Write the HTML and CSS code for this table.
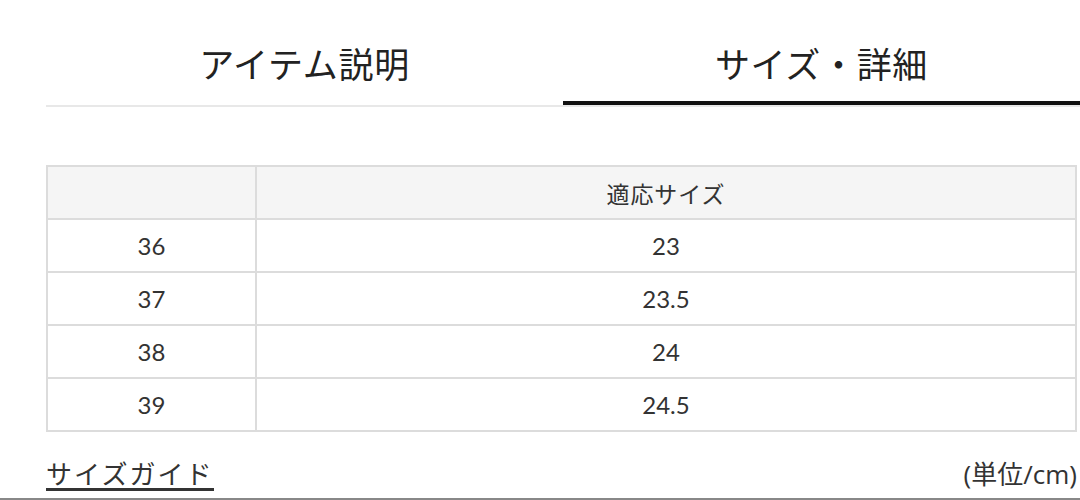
FILE: index.html
```html
<!DOCTYPE html>
<html lang="ja">
<head>
<meta charset="utf-8">
<link rel="stylesheet" href="styles.css">
</head>
<body>
<div class="page">
  <nav class="tabs">
    <div class="tab">アイテム説明</div>
    <div class="tab tab-active">サイズ・詳細</div>
  </nav>
  <section class="detail">
    <table class="size-table">
      <thead>
        <tr><th class="col-label"></th><th>適応サイズ</th></tr>
      </thead>
      <tbody>
        <tr><td>36</td><td>23</td></tr>
        <tr><td>37</td><td>23.5</td></tr>
        <tr><td>38</td><td>24</td></tr>
        <tr><td>39</td><td>24.5</td></tr>
      </tbody>
    </table>
    <div class="foot">
      <a class="guide" href="#">サイズガイド</a>
      <span class="unit">(単位/cm)</span>
    </div>
  </section>
</div>
<div class="rule"></div>
</body>
</html>
```
FILE: styles.css
```css
html, body {
  margin: 0;
  padding: 0;
  background: #fff;
}
body {
  width: 1080px;
  height: 500px;
  overflow: hidden;
  font-family: Lato, "Noto Sans CJK JP", sans-serif;
  color: #333;
  position: relative;
}
.page {
  padding-left: 46px;
}
.tabs {
  display: flex;
  border-bottom: 2px solid #e8e8e8;
}
.tab {
  flex: 1;
  text-align: center;
  font-family: "Noto Sans CJK JP", sans-serif;
  font-size: 35px;
  color: #222;
  height: 105px;
  line-height: 1;
  padding-top: 45px;
  box-sizing: border-box;
  letter-spacing: 0.02em;
}
.tab-active {
  border-bottom: 4px solid #111;
  margin-bottom: -3px;
}
.detail {
  padding-right: 3px;
  padding-top: 58px;
}
.size-table {
  width: 100%;
  border-collapse: collapse;
  font-size: 24px;
  color: #333;
}
.size-table th,
.size-table td {
  border: 2px solid #dcdcdc;
  text-align: center;
  height: 51px;
  padding: 0;
  font-weight: normal;
}
.size-table th {
  background: #f5f5f5;
  font-family: "Noto Sans CJK JP", sans-serif;
  font-size: 23px;
  letter-spacing: 0.04em;
}
.size-table .col-label {
  width: 207px;
}
.foot {
  display: flex;
  justify-content: space-between;
  align-items: flex-end;
  margin-top: 27px;
}
.guide {
  font-family: "Noto Sans CJK JP", sans-serif;
  font-size: 26px;
  color: #333;
  text-decoration: none;
  border-bottom: 3px solid #333;
  line-height: 1.1;
  letter-spacing: 0.08em;
}
.unit {
  font-family: "Open Sans", "Noto Sans CJK JP", sans-serif;
  font-size: 26px;
  color: #333;
  line-height: 1.2;
}
.rule {
  position: absolute;
  left: 0;
  right: 0;
  bottom: 0;
  height: 2px;
  background: #888;
}
```
